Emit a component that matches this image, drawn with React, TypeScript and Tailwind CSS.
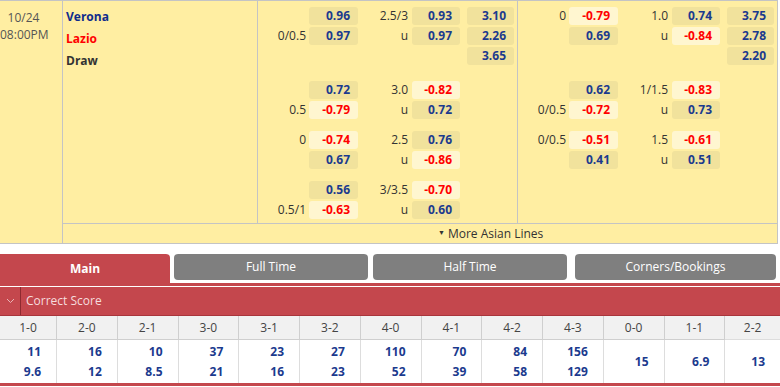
import React from "react";

type Row = [string, string, string, string, string?];

function Box({ v }: { v?: string }) {
  if (!v) return <div />;
  const neg = v.startsWith("-");
  return (
    <div
      className={
        neg
          ? "h-[18px] rounded-[3px] bg-[#FFF6D0] pr-[8px] text-right text-[12px] font-bold leading-[18px] text-[#FF0000]"
          : "h-[18px] rounded-[3px] bg-[#F1E29C] pr-[8px] text-right text-[12px] font-bold leading-[18px] text-[#1B3A8E]"
      }
    >
      {v}
    </div>
  );
}

function OddsRow({ r }: { r: Row }) {
  return (
    <div className="grid h-[20px] grid-cols-[50px_49px_54px_48px_7px_47px] items-start">
      <div className="pr-[3px] text-right text-[12px] leading-[18px] text-[#333]">{r[0]}</div>
      <Box v={r[1]} />
      <div className="pr-[4px] text-right text-[12px] leading-[18px] text-[#333]">{r[2]}</div>
      <Box v={r[3]} />
      <div />
      <Box v={r[4]} />
    </div>
  );
}

const blocks: { s1: Row[]; s2: Row[] }[] = [
  {
    s1: [
      ["", "0.96", "2.5/3", "0.93", "3.10"],
      ["0/0.5", "0.97", "u", "0.97", "2.26"],
      ["", "", "", "", "3.65"],
    ],
    s2: [
      ["0", "-0.79", "1.0", "0.74", "3.75"],
      ["", "0.69", "u", "-0.84", "2.78"],
      ["", "", "", "", "2.20"],
    ],
  },
  {
    s1: [
      ["", "0.72", "3.0", "-0.82"],
      ["0.5", "-0.79", "u", "0.72"],
    ],
    s2: [
      ["", "0.62", "1/1.5", "-0.83"],
      ["0/0.5", "-0.72", "u", "0.73"],
    ],
  },
  {
    s1: [
      ["0", "-0.74", "2.5", "0.76"],
      ["", "0.67", "u", "-0.86"],
    ],
    s2: [
      ["0/0.5", "-0.51", "1.5", "-0.61"],
      ["", "0.41", "u", "0.51"],
    ],
  },
  {
    s1: [
      ["", "0.56", "3/3.5", "-0.70"],
      ["0.5/1", "-0.63", "u", "0.60"],
    ],
    s2: [],
  },
];

const scores: { k: string; a: string; b?: string }[] = [
  { k: "1-0", a: "11", b: "9.6" },
  { k: "2-0", a: "16", b: "12" },
  { k: "2-1", a: "10", b: "8.5" },
  { k: "3-0", a: "37", b: "21" },
  { k: "3-1", a: "23", b: "16" },
  { k: "3-2", a: "27", b: "23" },
  { k: "4-0", a: "110", b: "52" },
  { k: "4-1", a: "70", b: "39" },
  { k: "4-2", a: "84", b: "58" },
  { k: "4-3", a: "156", b: "129" },
  { k: "0-0", a: "15" },
  { k: "1-1", a: "6.9" },
  { k: "2-2", a: "13" },
];

function Section({ idx }: { idx: 1 | 2 }) {
  return (
    <div className="w-[260px] border-r border-[#C4C4C4] pl-[1px]">
      {blocks.map((b, i) => {
        const rows = idx === 1 ? b.s1 : b.s2;
        const pad =
          i === 0
            ? "pt-[6px] pb-[4px]"
            : i === blocks.length - 1
            ? "pt-[10px] pb-[2px]"
            : "pt-[10px]";
        return (
          <div key={i} className={pad}>
            {(rows.length ? rows : [["", "", "", ""] as Row, ["", "", "", ""] as Row]).map((r, j) => (
              <OddsRow key={j} r={r} />
            ))}
          </div>
        );
      })}
    </div>
  );
}

export default function App() {
  return (
    <div className="w-[780px] h-[387px] overflow-hidden bg-white font-['Open_Sans',sans-serif] text-[12px]">
      {/* match panel */}
      <div className="flex w-[778px] border-t border-b border-[#C4C4C4] bg-[#FFEEA2]">
        <div className="w-[63px] border-r border-[#C4C4C4] pt-[8px] pr-[15px] text-center text-[12px] leading-[17px] text-[#555]">
          <div>10/24</div>
          <div>08:00PM</div>
        </div>
        <div className="flex flex-col">
          <div className="flex">
            <div className="w-[195px] border-r border-[#C4C4C4] pl-[3px] pt-[5px] text-[12px] font-bold leading-[22px]">
              <div className="text-[#0F2C8C]">Verona</div>
              <div className="text-[#FF0000]">Lazio</div>
              <div className="text-[#333]">Draw</div>
            </div>
            <Section idx={1} />
            <Section idx={2} />
          </div>
          <div className="flex h-[20px] items-center border-t border-r border-[#C4C4C4] pl-[375px] text-[12px] text-[#333]">
            <span className="mr-[3px] text-[7px]">▼</span>
            <span>More Asian Lines</span>
          </div>
        </div>
      </div>

      {/* tabs */}
      <div className="mt-[10px] flex items-start">
        <div className="flex h-[29px] w-[170px] items-center justify-center rounded-tr-[4px] bg-[#C4474D] text-[12px] font-bold text-white">
          Main
        </div>
        <div className="ml-[4px] flex h-[26px] w-[194px] items-center justify-center rounded-[4px] bg-[#7F7F7F] text-[12px] text-white">
          Full Time
        </div>
        <div className="ml-[5px] flex h-[26px] w-[194px] items-center justify-center rounded-[4px] bg-[#7F7F7F] text-[12px] text-white">
          Half Time
        </div>
        <div className="ml-[8px] flex h-[26px] w-[201px] items-center justify-center rounded-[4px] bg-[#7F7F7F] text-[12px] text-white">
          Corners/Bookings
        </div>
      </div>
      <div className="h-[3px] bg-[#C4474D]" />
      <div className="h-[1px] bg-white" />

      {/* correct score header */}
      <div className="flex h-[29px] items-center border-b border-[#A8353B] bg-[#C4474D]">
        <div className="flex h-full w-[21px] items-center justify-center border-r border-[#8E2A30]">
          <svg width="9" height="6" viewBox="0 0 9 6" fill="none">
            <path d="M1 1l3.5 3.5L8 1" stroke="#E9B5B7" strokeWidth="1" />
          </svg>
        </div>
        <div className="pl-[5px] text-[12px] text-[#F6DCDD]">Correct Score</div>
      </div>

      {/* score table */}
      <div className="grid grid-cols-[57px_repeat(11,60.75px)_1fr]">
        {scores.map((s, i) => (
          <div
            key={s.k}
            className={
              i === scores.length - 1
                ? "flex h-[24px] items-center justify-center border-b border-[#DDDDDD] bg-[#F1F1F1] text-[12px] text-[#444]"
                : "flex h-[24px] items-center justify-center border-r border-b border-[#CFCFCF] bg-[#F1F1F1] text-[12px] text-[#444]"
            }
          >
            {s.k}
          </div>
        ))}
        {scores.map((s, i) => (
          <div
            key={s.k + "v"}
            className={
              i === scores.length - 1
                ? "flex h-[43px] flex-col justify-center pr-[15px] text-right text-[12px] font-bold leading-[20px] text-[#1B3A8E]"
                : "flex h-[43px] flex-col justify-center border-r border-[#DDDDDD] pr-[15px] text-right text-[12px] font-bold leading-[20px] text-[#1B3A8E]"
            }
          >
            <div>{s.a}</div>
            {s.b && <div>{s.b}</div>}
          </div>
        ))}
      </div>
      <div className="h-[3px] bg-[#C4474D]" />
    </div>
  );
}
